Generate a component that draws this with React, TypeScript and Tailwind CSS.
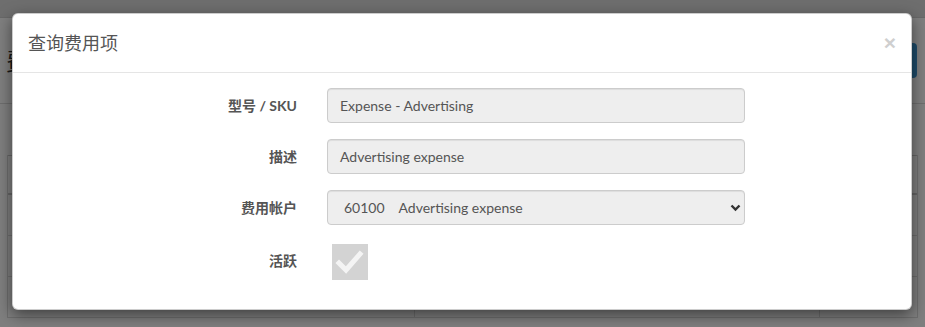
import React from "react";

const font = "font-['Lato','Noto_Sans_CJK_SC',sans-serif]";

function Row({ label, children, h = "h-[35px]" }: { label: string; children: React.ReactNode; h?: string }) {
  return (
    <div className={`flex items-center ${h}`}>
      <div className="w-[284px] text-right text-[14px] font-bold text-[#555]">{label}</div>
      <div className="ml-[30px] h-full">{children}</div>
    </div>
  );
}

function TextBox({ value }: { value: string }) {
  return (
    <div className="flex h-[35px] w-[418px] items-center rounded-[4px] border border-[#ccc] bg-[#eee] px-[12px] text-[14px] text-[#555] shadow-[inset_0_1px_1px_rgba(0,0,0,0.075)]">
      {value}
    </div>
  );
}

export default function App() {
  return (
    <div className={`relative h-[327px] w-[925px] overflow-hidden bg-white ${font}`}>
      {/* background page */}
      <div className="flex h-full flex-col">
        <div className="h-[18px] border-b border-[#d0d0d0] bg-[#dcdcdc]" />
        <div className="flex h-[86px] items-center justify-between border-b border-[#ddd] pl-[6px]">
          <span className="text-[24px] text-[#333]">费</span>
          <div className="mr-[8px] h-[35px] w-[70px] rounded-[4px] bg-[#3a96d2]" />
        </div>
        <div className="mt-[51px] ml-[7px] w-[911px] border-l border-r border-[#ddd]">
          <div className="flex h-[40px] border-t border-b-2 border-[#ccc]">
            <div className="w-[407px] border-r border-[#ddd]" />
            <div className="w-[405px] border-r border-[#ddd]" />
          </div>
          {[0, 1, 2].map((i) => (
            <div key={i} className="flex h-[41px] border-b border-[#ddd]">
              <div className="w-[407px] border-r border-[#ddd]" />
              <div className="w-[405px] border-r border-[#ddd]" />
            </div>
          ))}
        </div>
      </div>

      {/* overlay */}
      <div className="absolute inset-0 bg-black/50" />

      {/* modal */}
      <div className="absolute left-[12px] top-[13px] w-[900px] rounded-[6px] border border-black/20 bg-white shadow-[0_5px_15px_rgba(0,0,0,0.5)]">
        <div className="flex h-[59px] items-center justify-between border-b border-[#e5e5e5] px-[15px]">
          <span className="text-[18px] text-[#555]">查询费用项</span>
          <span className="mt-[-2px] font-['Liberation_Sans',sans-serif] text-[21px] font-bold leading-none text-[#cfcfcf]">×</span>
        </div>
        <div className="flex flex-col gap-[16px] pt-[15px] pb-[29px]">
          <Row label="型号 / SKU">
            <TextBox value="Expense - Advertising" />
          </Row>
          <Row label="描述">
            <TextBox value="Advertising expense" />
          </Row>
          <Row label="费用帐户">
            <div className="relative h-[35px] w-[418px]">
              <select
                disabled
                defaultValue="60100"
                className={`h-[35px] w-[418px] appearance-none rounded-[4px] border border-[#ccc] bg-[#eee] pl-[16px] text-[14px] text-[#555] opacity-100 shadow-[inset_0_1px_1px_rgba(0,0,0,0.075)] ${font}`}
              >
                <option value="60100">60100&nbsp;&nbsp;&nbsp;&nbsp;Advertising expense</option>
              </select>
              <svg className="pointer-events-none absolute right-[4px] top-[14px]" width="11" height="8" viewBox="0 0 11 8">
                <polyline points="1.5,1.5 5.5,5.5 9.5,1.5" fill="none" stroke="#333" strokeWidth="2.4" />
              </svg>
            </div>
          </Row>
          <Row label="活跃" h="h-[39px]">
            <div className="pt-[3px] pl-[5px]">
              <div className="flex h-[36px] w-[36px] items-center justify-center bg-[#d3d3d3]">
                <svg width="36" height="36" viewBox="0 0 36 36">
                  <polyline points="7,19 14,26 28,10" fill="none" stroke="#f4f4f4" strokeWidth="5" strokeLinecap="square" />
                </svg>
              </div>
            </div>
          </Row>
        </div>
      </div>
    </div>
  );
}
